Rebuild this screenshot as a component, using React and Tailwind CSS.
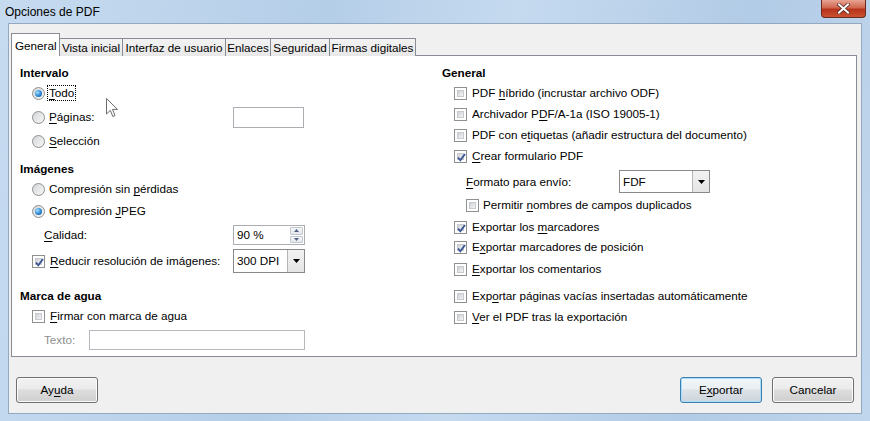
import React from 'react';

// mnemonic label: one char underlined
function M({ text, u }) {
  if (u == null) return <>{text}</>;
  return (
    <>
      {text.slice(0, u)}
      <span className="underline underline-offset-2">{text[u]}</span>
      {text.slice(u + 1)}
    </>
  );
}

function Radio({ on }) {
  return (
    <span className="w-[13px] h-[13px] shrink-0 rounded-full border border-[#8e8f8f] bg-[linear-gradient(135deg,#d4d6d9,#f7f7f7)] flex items-center justify-center">
      {on && <span className="w-[7px] h-[7px] rounded-full bg-[radial-gradient(circle_at_35%_35%,#a6e0ff,#2a86d4_55%,#0d4a86)]" />}
    </span>
  );
}

function Check({ on }) {
  return (
    <span className="relative w-[13px] h-[13px] shrink-0 border border-[#8e8f8f] bg-white p-[2px] flex">
      <span className="flex-1 border border-[#c7cace] bg-[linear-gradient(135deg,#cdd1d6,#f4f4f4)]" />
      {on && (
        <svg className="absolute left-[1px] top-[1px]" width="11" height="11" viewBox="0 0 11 11">
          <path d="M2 5.5 L4.3 8.3 L9 2" fill="none" stroke="#3c5694" strokeWidth="1.9" />
        </svg>
      )}
    </span>
  );
}

function Row({ className = '', children }) {
  return <div className={`h-[20px] flex items-center ${className}`}>{children}</div>;
}

function Heading({ className = '', children }) {
  return <div className={`h-[20px] flex items-center font-bold ${className}`}>{children}</div>;
}

function Combo({ value, w }) {
  return (
    <div className={`${w} h-full border border-[#8a8a8a] bg-white flex`}>
      <span className="flex-1 pl-[3px] flex items-center">{value}</span>
      <span className="w-[17px] border-l border-[#b5b5b5] bg-[linear-gradient(#f2f2f2,#e4e4e4)] flex items-center justify-center">
        <svg width="7" height="4" viewBox="0 0 7 4"><path d="M0 0 H7 L3.5 4 Z" fill="#000" /></svg>
      </span>
    </div>
  );
}

function Spin() {
  return (
    <div className="w-[72px] h-[20px] border border-[#abadb3] bg-white flex">
      <span className="flex-1 pl-[3px] flex items-center">90 %</span>
      <span className="w-[15px] flex flex-col p-[1px] gap-[1px]">
        <span className="flex-1 rounded-[1px] border border-[#c3c7cf] bg-[linear-gradient(#f5f6f8,#e3e6eb)] flex items-center justify-center">
          <svg width="5" height="3" viewBox="0 0 5 3"><path d="M0 3 H5 L2.5 0 Z" fill="#4d6185" /></svg>
        </span>
        <span className="flex-1 rounded-[1px] border border-[#c3c7cf] bg-[linear-gradient(#f5f6f8,#e3e6eb)] flex items-center justify-center">
          <svg width="5" height="3" viewBox="0 0 5 3"><path d="M0 0 H5 L2.5 3 Z" fill="#4d6185" /></svg>
        </span>
      </span>
    </div>
  );
}

const tabs = [
  ['Vista inicial', 'w-[64px]'],
  ['Interfaz de usuario', 'w-[104px]'],
  ['Enlaces', 'w-[46px]'],
  ['Seguridad', 'w-[60px]'],
  ['Firmas digitales', 'w-[87px]'],
];

function Button({ children, def }) {
  return (
    <button
      className={`w-[82px] h-[26px] rounded-[3px] border ${
        def
          ? 'border-[#3c7fb1] shadow-[inset_0_0_0_1px_#a9dcf8] bg-[linear-gradient(#f1f6f9_0%,#eaeff3_45%,#dbe2e8_50%,#cdd5dc_100%)]'
          : 'border-[#707070] shadow-[inset_0_0_0_1px_#fbfbfb] bg-[linear-gradient(#f2f2f2_0%,#ebebeb_45%,#dddddd_50%,#cfcfcf_100%)]'
      }`}
    >
      {children}
    </button>
  );
}

export default function App() {
  return (
    <div className="w-[870px] h-[421px] flex flex-col text-[11.7px] leading-none text-black font-['Liberation_Sans',Arial,sans-serif] bg-[linear-gradient(100deg,#c6dbf0,#b5cee8_35%,#c5daef_55%,#b2cbe6_80%,#c0d6ec)]">
      {/* title bar */}
      <div className="h-[23px] flex justify-between pl-[5px] pr-[4px]">
        <span className="self-center text-[12px]">Opciones de PDF</span>
        <div className="w-[45px] h-[18px] rounded-b-[4px] border border-t-0 border-[#6f2a1f] bg-[linear-gradient(#e8a493,#d0674f_45%,#b8331c_55%,#c9522f)] flex items-center justify-center">
          <svg width="13" height="11" viewBox="0 0 13 11">
            <path d="M2 1.5 L11 9.5 M11 1.5 L2 9.5" stroke="#5a2a22" strokeWidth="3.6" strokeLinecap="square" />
            <path d="M2 1.5 L11 9.5 M11 1.5 L2 9.5" stroke="#ffffff" strokeWidth="2" strokeLinecap="square" />
          </svg>
        </div>
      </div>

      {/* client area */}
      <div className="mx-[8px] h-[391px] border border-[#94a9c0] bg-[#f0f0f0] flex flex-col pt-[9px]">
        {/* tabs */}
        <div className="relative z-10 ml-[2px] h-[23px] flex items-end">
          <div className="w-[49px] h-[23px] bg-white border border-b-0 border-[#898c95] pl-[3px] pt-[6px]">General</div>
          {tabs.map(([t, w]) => (
            <div
              key={t}
              className={`${w} h-[18px] -ml-px first:ml-0 border border-b-0 border-[#898c95] bg-[linear-gradient(#f3f3f3,#e8e8e8)] flex items-center justify-center pt-px`}
            >
              {t}
            </div>
          ))}
        </div>

        {/* panel */}
        <div className="relative ml-[2px] mr-[4px] -mt-px h-[302px] border border-[#898c95] bg-white grid grid-cols-[422px_1fr] pl-[8px] pt-[7px]">
          {/* left column */}
          <div className="flex flex-col">
            <Heading>Intervalo</Heading>
            <Row className="pl-3">
              <Radio on />
              <span className="ml-[3px] px-[1px] py-[1px] outline-1 outline-dotted outline-black">
                <M text="Todo" u={0} />
              </span>
            </Row>
            <div className="mt-[3px] h-[22px] pl-3 flex items-center">
              <div className="w-[201px] flex items-center">
                <Radio />
                <span className="ml-[4px]"><M text="Páginas:" u={0} /></span>
              </div>
              <div className="w-[71px] h-[21px] border border-[#abadb3] bg-white" />
            </div>
            <Row className="mt-[3px] pl-3">
              <Radio />
              <span className="ml-[4px]"><M text="Selección" u={0} /></span>
            </Row>

            <Heading className="mt-[8px]">Imágenes</Heading>
            <Row className="pl-3">
              <Radio />
              <span className="ml-[4px]"><M text="Compresión sin pérdidas" u={15} /></span>
            </Row>
            <Row className="mt-[2px] pl-3">
              <Radio on />
              <span className="ml-[4px]"><M text="Compresión JPEG" u={11} /></span>
            </Row>
            <div className="mt-[3px] h-[22px] pl-6 flex items-center">
              <span className="w-[189px]"><M text="Calidad:" u={0} /></span>
              <Spin />
            </div>
            <div className="mt-[3px] h-[24px] pl-3 flex items-center">
              <div className="w-[201px] flex items-center">
                <Check on />
                <span className="ml-[5px]"><M text="Reducir resolución de imágenes:" u={0} /></span>
              </div>
              <Combo value="300 DPI" w="w-[72px]" />
            </div>

            <Heading className="mt-[13px]">Marca de agua</Heading>
            <Row className="pl-3">
              <Check />
              <span className="ml-[5px]"><M text="Firmar con marca de agua" u={0} /></span>
            </Row>
            <div className="mt-[4px] h-[20px] pl-6 flex items-center">
              <span className="w-[45px] text-[#8d8d8d]">Texto:</span>
              <div className="w-[216px] h-[20px] border border-[#b5b9bd] bg-white" />
            </div>
          </div>

          {/* right column */}
          <div className="flex flex-col">
            <Heading>General</Heading>
            <Row className="pl-3">
              <Check />
              <span className="ml-[5px]"><M text="PDF híbrido (incrustar archivo ODF)" u={4} /></span>
            </Row>
            <Row className="mt-px pl-3">
              <Check />
              <span className="ml-[5px]"><M text="Archivador PDF/A-1a (ISO 19005-1)" u={12} /></span>
            </Row>
            <Row className="mt-px pl-3">
              <Check />
              <span className="ml-[5px]"><M text="PDF con etiquetas (añadir estructura del documento)" u={9} /></span>
            </Row>
            <Row className="mt-px pl-3">
              <Check on />
              <span className="ml-[5px]"><M text="Crear formulario PDF" u={0} /></span>
            </Row>
            <div className="mt-[4px] h-[23px] pl-6 flex items-center">
              <span className="w-[153px]"><M text="Formato para envío:" u={0} /></span>
              <Combo value="FDF" w="w-[91px]" />
            </div>
            <Row className="mt-[2px] pl-6">
              <Check />
              <span className="ml-[4px]"><M text="Permitir nombres de campos duplicados" u={9} /></span>
            </Row>
            <Row className="mt-[2px] pl-3">
              <Check on />
              <span className="ml-[5px]"><M text="Exportar los marcadores" u={13} /></span>
            </Row>
            <Row className="pl-3">
              <Check on />
              <span className="ml-[5px]"><M text="Exportar marcadores de posición" u={1} /></span>
            </Row>
            <Row className="mt-[2px] pl-3">
              <Check />
              <span className="ml-[5px]"><M text="Exportar los comentarios" u={0} /></span>
            </Row>
            <Row className="mt-[7px] pl-3">
              <Check />
              <span className="ml-[5px]"><M text="Exportar páginas vacías insertadas automáticamente" u={3} /></span>
            </Row>
            <Row className="mt-px pl-3">
              <Check />
              <span className="ml-[5px]"><M text="Ver el PDF tras la exportación" u={0} /></span>
            </Row>
          </div>

          {/* mouse pointer */}
          <svg className="absolute left-[94px] top-[42px]" width="13" height="20" viewBox="0 0 13 20">
            <path d="M0.5 0.5 L0.5 16 L4.3 12.3 L6.8 18.5 L9 17.6 L6.5 11.4 L11.5 11.4 Z" fill="#fff" stroke="#6b6b6b" strokeWidth="1" />
          </svg>
        </div>

        {/* buttons */}
        <div className="mt-[20px] px-[7px] flex justify-between">
          <Button><M text="Ayuda" u={2} /></Button>
          <div className="flex gap-[10px]">
            <Button def><M text="Exportar" u={1} /></Button>
            <Button>Cancelar</Button>
          </div>
        </div>
      </div>
    </div>
  );
}
